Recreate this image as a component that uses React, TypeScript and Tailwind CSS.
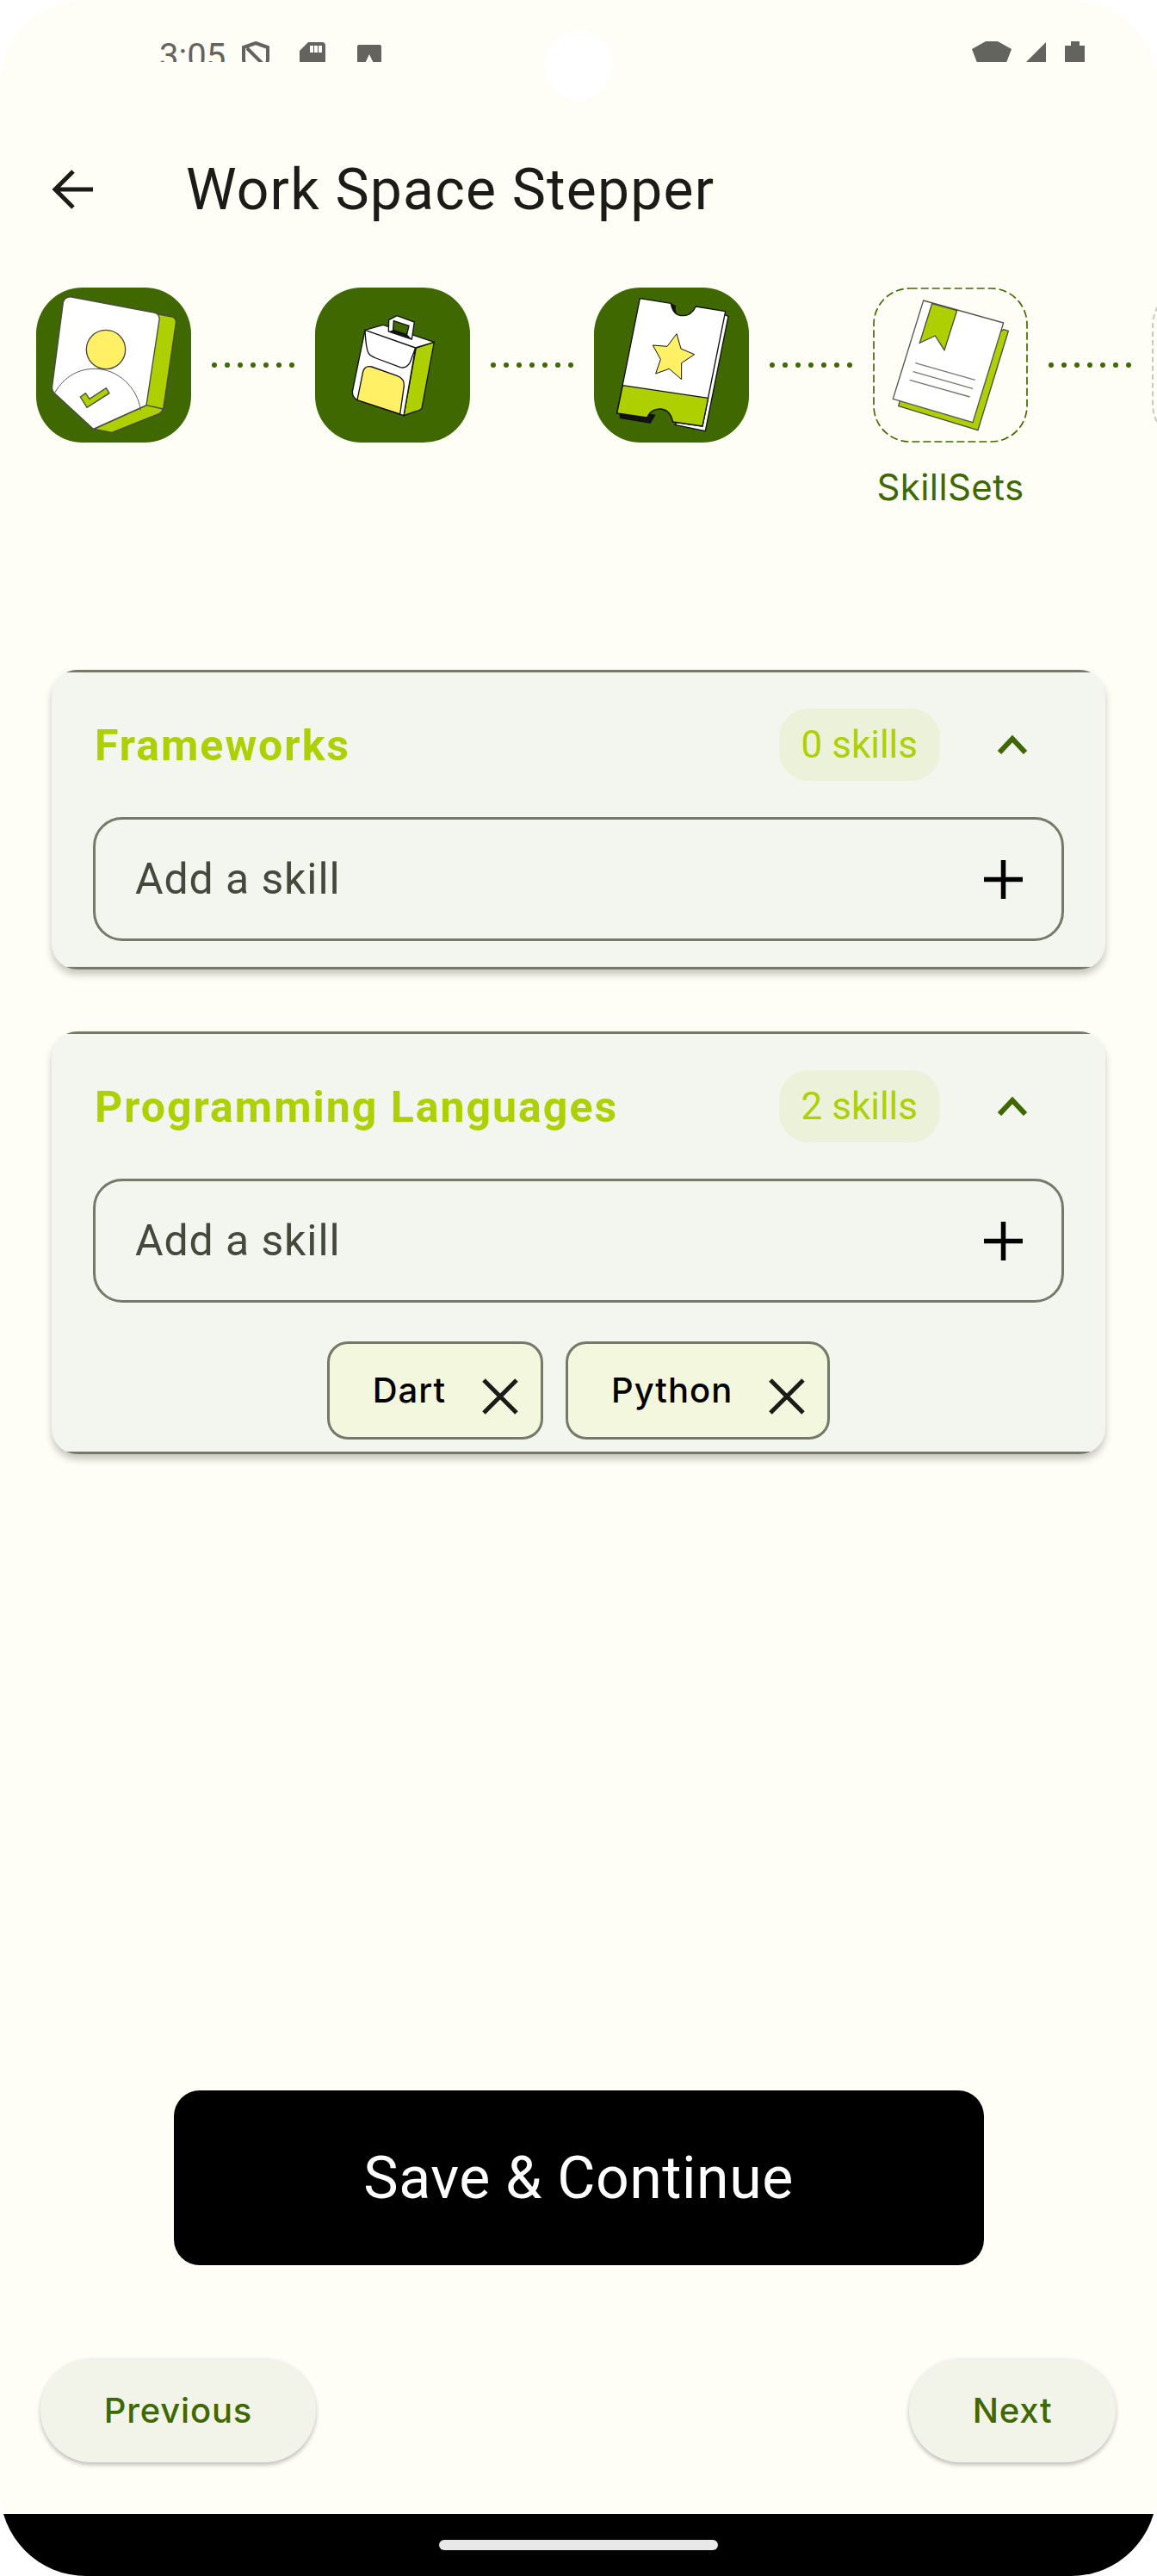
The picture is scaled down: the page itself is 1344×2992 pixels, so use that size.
import React from 'react';

const STEP_GREEN = '#aed000';
const STAR_YELLOW = '#fff066';

function ProfileIcon() {
  return (
    <svg viewBox="66 42 540 540" className="w-[180px] h-[180px]">
      <path d="M480 133 L540 144 Q555 148 553 165 L510 458 Q506 475 495 481 L330 547 L268 535 L445 455 Z" fill={STEP_GREEN} stroke="#4a4a44" strokeWidth="4" />
      <path d="M190 75 L480 130 Q497 135 495 155 L450 452 L265 535 L130 410 Q120 400 122 385 L160 95 Q165 72 190 75 Z" fill="#fff" stroke="#4a4a44" strokeWidth="4" />
      <path d="M450 452 L508 465" stroke="#4a4a44" strokeWidth="4" />
      <circle cx="309" cy="258" r="68" fill={STAR_YELLOW} stroke="#4a4a44" strokeWidth="4" />
      <path d="M130 410 C165 350 215 325 270 325 C350 325 420 390 430 470" fill="none" stroke="#5c5c58" strokeWidth="3" />
      <path d="M220 423 L238 410 L252 430 L310 392 L321 410 L243 460 Z" fill={STEP_GREEN} stroke="#4a4a44" strokeWidth="4" />
    </svg>
  );
}

function BagIcon() {
  return (
    <svg viewBox="48 42 540 540" className="w-[180px] h-[180px]">
      <path d="M400 252 L463 232 L420 462 Q415 470 400 473 L357 488 Z" fill={STEP_GREEN} stroke="#111" strokeWidth="4" />
      <path d="M222 190 L285 172 L463 232 L398 252 L357 488 L195 434 Q178 425 178 405 Z" fill="#fff" stroke="#111" strokeWidth="4" strokeLinejoin="round" />
      <path d="M222 190 L398 252" stroke="#111" strokeWidth="4" />
      <path d="M222 190 Q225 255 235 272 Q240 280 260 288 L345 320 Q365 325 378 305 L398 252" fill="none" stroke="#111" strokeWidth="4" />
      <path d="M195 434 L215 335 Q222 312 245 318 L335 350 Q360 360 358 385 L344 483 Z" fill={STAR_YELLOW} stroke="#111" strokeWidth="4" />
      <path d="M305 155 L333 140 L394 162 L385 222 L304 195 Z" fill="#fff" stroke="#111" strokeWidth="4" />
      <path d="M322 158 L375 175 L368 205 L320 190 Z" fill="#3f6800" stroke="#111" strokeWidth="4" />
      <path d="M306 195 L320 190 L368 205 L383 220 Z" fill="#111" />
    </svg>
  );
}

function TicketIcon() {
  const notched = 'Q295 465 260 465 Q228 465 215 495 L110 480';
  return (
    <svg viewBox="30 42 540 540" className="w-[180px] h-[180px]">
      <path d="M470 130 L498 142 L418 542 L312 520 L330 500 Z" fill="#fff" stroke="#111" strokeWidth="4" />
      <path d="M118 480 L120 498 L227 516 L245 485 L215 480 Z" fill="#111" />
      <path d={`M190 80 L298 97 Q305 140 340 140 Q370 140 385 108 L488 125 L408 525 L305 510 ${notched} Z`} fill="#fff" stroke="#111" strokeWidth="4" strokeLinejoin="round" />
      <path d="M298 97 Q305 130 320 138 Q312 120 315 105 Z" fill="#111" />
      <path d={`M130 383 L428 427 L408 525 L305 510 ${notched} Z`} fill={STEP_GREEN} stroke="#111" strokeWidth="4" strokeLinejoin="round" />
      <path d="M318 203 L333 255 L380 275 L335 305 L335 362 L292 325 L245 342 L262 292 L235 243 L285 247 Z" fill={STAR_YELLOW} stroke="#111" strokeWidth="3" />
    </svg>
  );
}

function BookIcon() {
  return (
    <svg viewBox="42 42 540 540" className="w-[180px] h-[180px]">
      <rect x="45" y="45" width="534" height="534" rx="125" fill="none" stroke="#3f6800" strokeWidth="5" strokeDasharray="27 12" />
      <path d="M497 188 L514 193 L408 539 L131 455 L136 437 Z" fill={STEP_GREEN} stroke="#4a4a44" strokeWidth="4" />
      <path d="M218 87 L497 165 L390 512 L112 430 Z" fill="#fff" stroke="#55554f" strokeWidth="4" />
      <path d="M248 98 L335 122 L291 260 L259 210 L205 235 Z" fill={STEP_GREEN} stroke="#4a4a44" strokeWidth="4" />
      <path d="M190 305 L398 364 M182 335 L390 394 M170 364 L380 423" stroke="#77776f" strokeWidth="4" />
    </svg>
  );
}

function Dots() {
  return (
    <div className="w-[144px] h-[180px] shrink-0 flex items-center justify-center gap-[9px]">
      {[0, 1, 2, 3, 4, 5, 6].map(i => (
        <span key={i} className="w-[6px] h-[6px] rounded-full bg-[#3f6800]" />
      ))}
    </div>
  );
}

function StatusBar() {
  return (
    <div className="h-[72px] overflow-hidden flex items-start pl-[185px] pr-[84px] text-[#63645e]">
      <span className="mt-[42px] mr-[19px] text-[40px] leading-[48px] font-['Roboto',sans-serif]">3:05</span>
      <svg viewBox="0 0 32 40" className="mt-[48px] w-[32px] h-[40px] shrink-0" fill="none" stroke="#63645e" strokeWidth="4">
        <path d="M16 2 L30 7 V20 Q30 32 16 38 Q2 32 2 20 V7 Z M6 8 L27 29" />
      </svg>
      <svg viewBox="0 0 30 40" className="mt-[49px] ml-[35px] w-[30px] h-[40px] shrink-0">
        <path d="M10 0 H26 Q30 0 30 4 V40 H0 V10 Z" fill="#63645e" />
        <path d="M12 4 H16 V12 H12 Z M17 4 H21 V12 H17 Z M22 4 H26 V12 H22 Z" fill="#fff" />
      </svg>
      <svg viewBox="0 0 28 32" className="mt-[52px] ml-[37px] w-[28px] h-[32px] shrink-0">
        <rect width="28" height="32" rx="2" fill="#63645e" />
        <path d="M14 11 L23 30 H19 L14 19 L9 30 H5 Z" fill="#fff" />
      </svg>
      <div className="flex-1" />
      <svg viewBox="0 0 46 30" className="mt-[48px] w-[46px] h-[30px] shrink-0">
        <path d="M16 0 H30 L46 9 L38 30 H8 L0 9 Z" fill="#63645e" />
      </svg>
      <svg viewBox="0 0 23 23" className="mt-[49px] ml-[17px] w-[23px] h-[23px] shrink-0">
        <path d="M23 0 V23 H0 Z" fill="#63645e" />
      </svg>
      <svg viewBox="0 0 23 34" className="mt-[48px] ml-[22px] w-[23px] h-[34px] shrink-0">
        <path d="M7 0 H17 V5 H23 V34 H0 V5 H7 Z" fill="#63645e" />
      </svg>
    </div>
  );
}

function Stepper() {
  return (
    <div className="mt-[66px] pl-[42px] flex items-start overflow-hidden h-[260px]">
      <div className="w-[180px] h-[180px] shrink-0 rounded-[54px] bg-[#3f6800]"><ProfileIcon /></div>
      <Dots />
      <div className="w-[180px] h-[180px] shrink-0 rounded-[54px] bg-[#3f6800]"><BagIcon /></div>
      <Dots />
      <div className="w-[180px] h-[180px] shrink-0 rounded-[54px] bg-[#3f6800]"><TicketIcon /></div>
      <Dots />
      <div className="w-[180px] shrink-0 flex flex-col items-center">
        <BookIcon />
        <span className="mt-[28px] text-[42px] leading-[48px] tracking-[0.4px] text-[#3f6800] font-['Inter',sans-serif]">SkillSets</span>
      </div>
      <Dots />
      <div className="w-[180px] h-[180px] shrink-0 rounded-[44px] border-2 border-dashed border-[#c8c8c0]" />
    </div>
  );
}

function SkillInput() {
  return (
    <div className="mt-[42px] h-[144px] rounded-[34px] border-[3px] border-[#777968] flex items-center pl-[46px] pr-[45px]">
      <span className="flex-1 text-[50px] leading-[56px] tracking-[0.9px] text-[#46483c] font-['Roboto',sans-serif]">Add a skill</span>
      <svg viewBox="0 0 45 45" className="w-[45px] h-[45px]" stroke="#000" strokeWidth="5.5">
        <path d="M22.5 0 V45 M0 22.5 H45" />
      </svg>
    </div>
  );
}

function SkillChip({ name }: { name: string }) {
  return (
    <div className="h-[114px] rounded-[24px] border-[3px] border-[#777968] bg-[#f3f7dd] flex items-center pl-[50px] pr-[26px]">
      <span className="text-[40px] leading-[50px] tracking-[1px] font-medium text-black font-['Inter',sans-serif]">{name}</span>
      <svg viewBox="0 0 42 42" className="ml-[42px] mt-[13px] w-[42px] h-[42px]" stroke="#1b1c18" strokeWidth="5">
        <path d="M2 2 L40 40 M40 2 L2 40" />
      </svg>
    </div>
  );
}

function SkillCard({ title, count, children }: { title: string; count: number; children?: React.ReactNode }) {
  return (
    <div className="mx-[60px] rounded-[30px] overflow-hidden bg-[#f3f5ef] shadow-[0_6px_8px_rgba(0,0,0,0.22)]">
      <div className="border-y-[3px] border-[#777968] px-[48px] pt-[42px]">
        <div className="flex items-center h-[84px]">
          <span className="flex-1 pl-[2px] pt-[2px] text-[50px] leading-[56px] font-bold tracking-[2px] text-[#aed000] font-['Roboto',sans-serif]">{title}</span>
          <span className="h-[84px] flex items-center rounded-[34px] bg-[#ecf2da] px-[26px] text-[44px] leading-[50px] text-[#aed000] font-['Roboto',sans-serif]">
            {count} skills
          </span>
          <svg viewBox="0 0 34 22" className="ml-[67px] mr-[43px] w-[34px] h-[22px]" fill="none" stroke="#3f6800" strokeWidth="6">
            <path d="M2 20 L17 4 L32 20" />
          </svg>
        </div>
        <SkillInput />
        {children}
      </div>
    </div>
  );
}

export default function App() {
  return (
    <div className="w-[1344px] h-[2992px] bg-white">
      <div className="relative w-full h-full rounded-[100px] overflow-hidden bg-[#fefef6] flex flex-col">
        <StatusBar />
        <div className="absolute left-[632px] top-[36px] w-[80px] h-[80px] rounded-full bg-white" />

        <div className="mt-[100px] h-[96px] flex items-center pl-[60px]">
          <svg viewBox="0 0 48 46" className="w-[48px] h-[46px]" fill="none" stroke="#1b1c18" strokeWidth="5">
            <path d="M48 23 H4 M25 2 L4 23 L25 44" />
          </svg>
          <h1 className="ml-[108px] pt-[2px] text-[66px] leading-[96px] tracking-[1.2px] text-[#1b1c18] font-['Roboto',sans-serif]">Work Space Stepper</h1>
        </div>

        <Stepper />

        <div className="mt-[184px]">
          <SkillCard title="Frameworks" count={0}>
            <div className="h-[30px]" />
          </SkillCard>
        </div>
        <div className="mt-[72px]">
          <SkillCard title="Programming Languages" count={2}>
            <div className="mt-[45px] pb-[14px] flex justify-center gap-[26px]">
              <SkillChip name="Dart" />
              <SkillChip name="Python" />
            </div>
          </SkillCard>
        </div>

        <div className="flex-1" />

        <button className="mx-auto w-[941px] h-[203px] rounded-[30px] bg-black text-white text-[68px] leading-[80px] tracking-[0.5px] font-['Roboto',sans-serif]">
          Save &amp; Continue
        </button>

        <div className="mt-[108px] mb-[60px] pl-[47px] pr-[48px] flex justify-between">
          <button className="w-[320px] h-[121px] rounded-[60px] bg-[#f2f4e9] text-[#3f6800] text-[40px] leading-[50px] tracking-[0.8px] font-medium shadow-[0_3px_5px_rgba(0,0,0,0.25)] font-['Inter',sans-serif]">
            Previous
          </button>
          <button className="w-[240px] h-[121px] rounded-[60px] bg-[#f2f4e9] text-[#3f6800] text-[40px] leading-[50px] tracking-[0.8px] font-medium shadow-[0_3px_5px_rgba(0,0,0,0.25)] font-['Inter',sans-serif]">
            Next
          </button>
        </div>

        <div className="h-[72px] bg-black flex justify-center pt-[30px]">
          <div className="w-[324px] h-[12px] rounded-full bg-[#e8e8e8]" />
        </div>
      </div>
    </div>
  );
}
